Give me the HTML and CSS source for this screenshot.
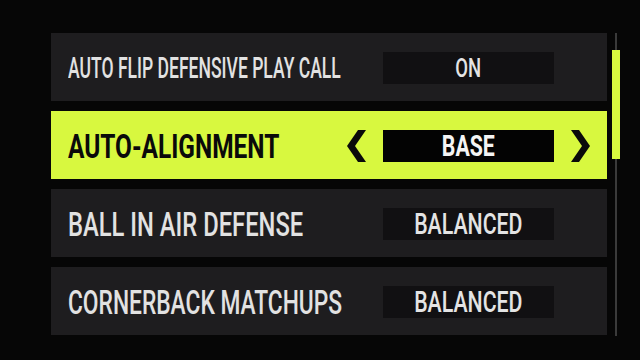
FILE: index.html
```html
<!DOCTYPE html>
<html lang="en">
<head>
<meta charset="utf-8">
<title>Defense Settings</title>
<link rel="stylesheet" href="styles.css">
</head>
<body>
<div class="screen">
  <div class="list">
    <div class="row">
      <div class="label"><span class="txt txt-fit">AUTO FLIP DEFENSIVE PLAY CALL</span></div>
      <div class="controls">
        <span class="chev hidden"></span>
        <div class="value"><span class="vtxt vtxt-small">ON</span></div>
        <span class="chev hidden"></span>
      </div>
    </div>
    <div class="row selected">
      <div class="label"><span class="txt">AUTO-ALIGNMENT</span></div>
      <div class="controls">
        <svg class="chev" viewBox="0 0 20 32"><polygon points="12,0 20,0 9,16 20,32 12,32 1,16"/></svg>
        <div class="value"><span class="vtxt">BASE</span></div>
        <svg class="chev" viewBox="0 0 20 32"><polygon points="8,0 0,0 11,16 0,32 8,32 19,16"/></svg>
      </div>
    </div>
    <div class="row">
      <div class="label"><span class="txt txt-b">BALL IN AIR DEFENSE</span></div>
      <div class="controls">
        <span class="chev hidden"></span>
        <div class="value"><span class="vtxt">BALANCED</span></div>
        <span class="chev hidden"></span>
      </div>
    </div>
    <div class="row">
      <div class="label"><span class="txt txt-c">CORNERBACK MATCHUPS</span></div>
      <div class="controls">
        <span class="chev hidden"></span>
        <div class="value"><span class="vtxt">BALANCED</span></div>
        <span class="chev hidden"></span>
      </div>
    </div>
  </div>
  <div class="scrollbar">
    <div class="track"></div>
    <div class="thumb"></div>
  </div>
</div>
</body>
</html>
```

FILE: styles.css
```css
* { box-sizing: border-box; }
html, body {
  margin: 0;
  padding: 0;
  background: #060606;
  width: 640px;
  height: 360px;
  overflow: hidden;
  font-family: Roboto, "Liberation Sans", sans-serif;
}
.screen {
  display: flex;
  padding: 33px 0 0 51px;
}
.list {
  width: 556px;
  display: flex;
  flex-direction: column;
  gap: 10px;
}
.row {
  height: 68px;
  background: #1e1d1f;
  display: flex;
  align-items: center;
  padding: 2px 16px 0 17px;
  color: #e2e2e2;
}
.row.selected {
  background: #d8f83f;
  color: #0a0a0a;
}
.label {
  flex: 1;
  min-width: 0;
  white-space: nowrap;
}
.txt {
  display: inline-block;
  font-size: 33px;
  line-height: 1;
  font-weight: 500;
  transform: scaleX(0.71);
  transform-origin: left center;
}
.txt-b { transform: scaleX(0.72); }
.txt-c { transform: scaleX(0.69); }
.txt-fit {
  font-size: 30px;
  transform: scaleX(0.585);
}
.selected .txt {
  font-weight: 700;
  transform: scaleX(0.74);
}
.controls {
  display: flex;
  align-items: center;
  gap: 17px;
}
.chev {
  width: 20px;
  height: 32px;
  display: block;
  fill: #0a0a0a;
}
.chev.hidden { visibility: hidden; }
.value {
  width: 171px;
  height: 32px;
  background: #111012;
  display: flex;
  align-items: center;
  justify-content: center;
}
.selected .value {
  background: #030303;
}
.vtxt {
  display: inline-block;
  font-size: 30px;
  line-height: 1;
  font-weight: 500;
  color: #e4e4e4;
  transform: scaleX(0.71);
  white-space: nowrap;
}
.vtxt-small {
  font-size: 26px;
}
.selected .vtxt {
  font-weight: 700;
  color: #f4f4f4;
}
.scrollbar {
  margin-left: 5px;
  width: 8px;
  height: 303px;
  display: flex;
  flex-direction: column;
  align-items: center;
  position: relative;
}
.track {
  width: 2px;
  height: 100%;
  background: #3a3a3a;
}
.thumb {
  position: absolute;
  top: 17px;
  left: 0;
  width: 8px;
  height: 109px;
  background: #d8f83f;
}
```
